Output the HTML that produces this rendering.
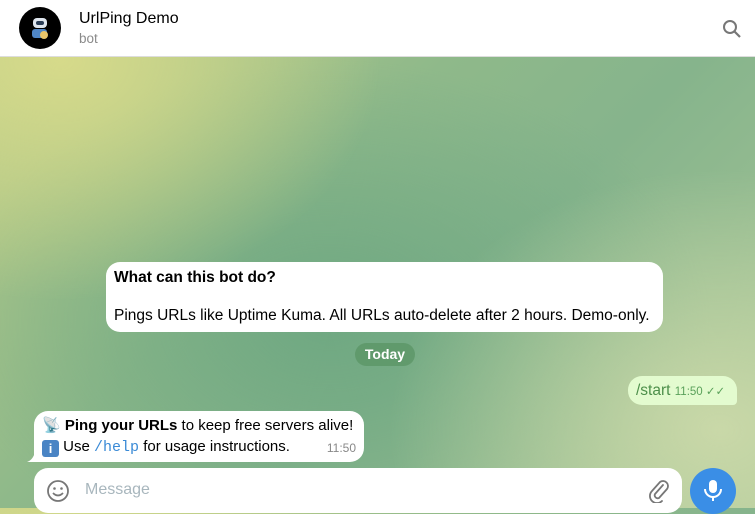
<!DOCTYPE html>
<html><head><meta charset="utf-8"><style>
*{margin:0;padding:0;box-sizing:border-box}
body{width:755px;height:508px;overflow:hidden;font-family:"Liberation Sans",Arial,sans-serif;position:relative;
background:
radial-gradient(ellipse 320px 240px at 60px 60px,#d6da8a 0%,rgba(214,218,138,0) 100%),
radial-gradient(ellipse 330px 260px at 720px 430px,#c9d8a8 0%,rgba(201,216,168,0) 100%),
radial-gradient(ellipse 380px 260px at 330px 320px,#6fa882 0%,rgba(111,168,130,0) 100%),
linear-gradient(135deg,#bccd88 0%,#8fb98a 40%,#86b48c 60%,#a9c697 100%);}
.hdr{position:absolute;left:0;top:0;width:755px;height:57px;background:#fff;border-bottom:1px solid #ddd}
.av{position:absolute;left:19px;top:7px;width:42px;height:42px;border-radius:50%;background:#000}
.t{position:absolute;left:79px;top:10px;font-size:16px;color:#000}
.s{position:absolute;left:79px;top:31px;font-size:13.5px;color:#8a8a8a}
.b{position:absolute;background:#fff;border-radius:14px;font-size:15px;color:#000;white-space:nowrap}
</style></head><body>
<div class="hdr">
<div class="av"><svg width="42" height="42"><rect x="14" y="11" width="14" height="10" rx="4" fill="#dfe6ee"/><rect x="17" y="14" width="8" height="4" rx="2" fill="#2a3d55"/><rect x="13" y="22" width="15" height="9" rx="3" fill="#4f86c6"/><circle cx="25" cy="28" r="4" fill="#e8c56a"/></svg></div>
<div class="t">UrlPing Demo</div><div class="s">bot</div>
<svg style="position:absolute;left:722px;top:19px" width="20" height="20"><circle cx="8" cy="8" r="6" fill="none" stroke="#777" stroke-width="2"/><path d="M12.5 12.5L18 18" stroke="#777" stroke-width="2.2"/></svg>
</div>
<div class="b" style="left:106px;top:262px;width:557px;height:70px;padding:5px 8px;font-size:15.5px">
<div style="font-weight:bold;line-height:18px;margin-top:2px">What can this bot do?</div>
<div style="margin-top:20px;line-height:18px">Pings URLs like Uptime Kuma. All URLs auto-delete after 2 hours. Demo-only.</div></div>
<div style="position:absolute;left:355px;top:343px;width:60px;height:23px;border-radius:12px;background:rgba(80,140,90,.55);color:#fff;font-weight:bold;font-size:14px;text-align:center;line-height:23px">Today</div>
<div class="b" style="left:628px;top:376px;width:109px;height:29px;background:#e3fbcf;border-radius:14px 14px 4px 14px;color:#4d8f4a;padding:4px 8px;line-height:22px;font-size:15.5px">/start <span style="font-size:11.5px;color:#5aa15a">11:50 ✓✓</span></div>
<div class="b" style="left:34px;top:411px;width:330px;height:51px;border-radius:14px 14px 14px 4px;padding:4px 8px;line-height:21px;font-size:15px">
<div>📡 <b>Ping your URLs</b> to keep free servers alive!</div>
<div><span style="display:inline-block;width:17px;height:17px;background:#4a84c4;border-radius:3px;color:#fff;font-size:13px;text-align:center;line-height:17px;font-weight:bold;vertical-align:-2px">i</span> Use <span style="font-family:'Liberation Mono',monospace;color:#3a8ad6">/help</span> for usage instructions.<span style="position:absolute;right:8px;bottom:3px;font-size:12px;color:#888">11:50</span></div></div>
<svg style="position:absolute;left:27px;top:452px" width="12" height="10"><path d="M0 10Q6 8 8 0L12 0L12 10Z" fill="#fff"/></svg>
<div style="position:absolute;left:34px;top:468px;width:648px;height:45px;background:#fff;border-radius:14px"></div>
<svg style="position:absolute;left:46px;top:479px" width="24" height="24"><circle cx="12" cy="12" r="10" fill="none" stroke="#777" stroke-width="1.8"/><circle cx="8.5" cy="9.5" r="1.3" fill="#777"/><circle cx="15.5" cy="9.5" r="1.3" fill="#777"/><path d="M7 14Q12 19 17 14" fill="none" stroke="#777" stroke-width="1.8"/></svg>
<div style="position:absolute;left:85px;top:481px;font-size:16px;color:#a8b6bd">Message</div>
<svg style="position:absolute;left:648px;top:479px" width="22" height="24"><path d="M15 6L7 15a3 3 0 0 0 4 4L19 10a5 5 0 0 0-7-7L4 12a7 7 0 0 0 10 10" fill="none" stroke="#777" stroke-width="1.8" stroke-linecap="round"/></svg>
<div style="position:absolute;left:690px;top:468px;width:46px;height:46px;border-radius:50%;background:#3a8ee6"></div>
<svg style="position:absolute;left:701px;top:478px" width="24" height="26"><rect x="8" y="2" width="8" height="13" rx="4" fill="#fff"/><path d="M4 11a8 8 0 0 0 16 0" fill="none" stroke="#fff" stroke-width="2"/><path d="M12 19v4" stroke="#fff" stroke-width="2"/></svg>
</body></html>
